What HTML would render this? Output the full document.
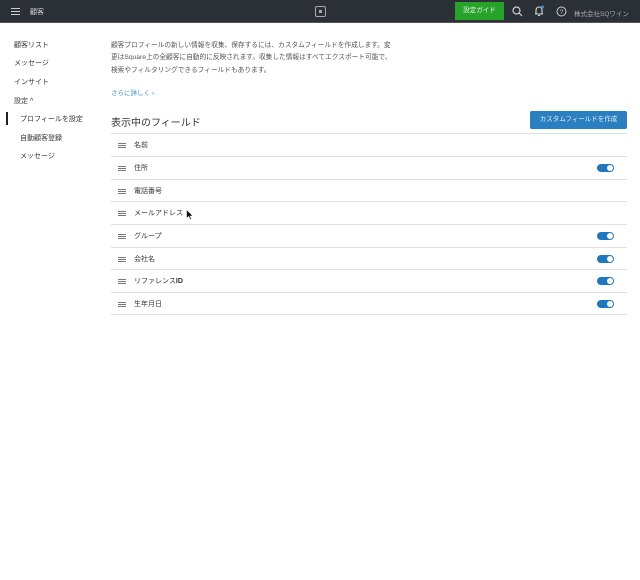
<!DOCTYPE html>
<html><head><meta charset="utf-8"><style>
*{margin:0;padding:0;box-sizing:border-box}
body{width:640px;height:580px;background:#fff;font-family:"Liberation Sans","Noto Sans CJK JP",sans-serif;color:#333;position:relative;overflow:hidden}
.hdr{position:absolute;left:0;top:0;width:640px;height:23px;background:#2b2f36;border-bottom:1px solid #555}
.a{position:absolute;white-space:nowrap}
.nav{font-size:7px;color:#333}
.row{position:absolute;left:111px;width:516px;height:23px;border-top:1px solid #e0e0e0}
.row .h{position:absolute;left:7px;top:9px;width:8px;height:5px;border-top:1px solid #777;border-bottom:1px solid #777}
.row .h:after{content:"";position:absolute;left:0;top:1px;width:8px;border-top:1px solid #777}
.row .t{position:absolute;left:23px;top:6px;font-size:7px;color:#333}
.tg{position:absolute;left:486px;top:7px;width:17px;height:8px;border-radius:4px;background:#1f78bd}
.tg:after{content:"";position:absolute;right:1px;top:1px;width:6px;height:6px;border-radius:3px;background:#fff}
</style></head><body>
<div class="hdr">
 <div class="a" style="left:11px;top:8px;width:9px;height:7px;border-top:1px solid #ccc;border-bottom:1px solid #ccc"></div>
 <div class="a" style="left:11px;top:11px;width:9px;border-top:1px solid #ccc"></div>
 <div class="a" style="left:30px;top:7px;font-size:7px;color:#ddd">顧客</div>
 <div class="a" style="left:315px;top:6px;width:11px;height:11px;border:1.5px solid #aaa;border-radius:2px"></div>
 <div class="a" style="left:319px;top:10px;width:3px;height:3px;background:#aaa"></div>
 <div class="a" style="left:455px;top:2px;width:49px;height:18px;background:#27a32a;color:#eee;font-size:6.5px;text-align:center;line-height:18px">設定ガイド</div>
 <svg class="a" style="left:512px;top:6px" width="11" height="11" viewBox="0 0 11 11"><circle cx="4.5" cy="4.5" r="3.5" fill="none" stroke="#ccc" stroke-width="1.2"/><path d="M7 7l3 3" stroke="#ccc" stroke-width="1.2"/></svg>
 <svg class="a" style="left:533px;top:5px" width="12" height="12" viewBox="0 0 12 12"><path d="M2 9h8M3 9V5a3 3 0 016 0v4M5 10.5h2" fill="none" stroke="#ddd" stroke-width="1.1"/><circle cx="9.5" cy="2" r="1.6" fill="#2a8fd8"/></svg>
 <svg class="a" style="left:556px;top:6px" width="11" height="11" viewBox="0 0 11 11"><circle cx="5.5" cy="5.5" r="4.5" fill="none" stroke="#ccc"/><text x="5.5" y="8" font-size="6.5" fill="#ccc" text-anchor="middle" font-family="Liberation Sans">?</text></svg>
 <div class="a" style="left:574px;top:8px;font-size:6.5px;color:#aaa">株式会社SQワイン</div>
</div>
<div class="a nav" style="left:14px;top:40px">顧客リスト</div>
<div class="a nav" style="left:14px;top:58px">メッセージ</div>
<div class="a nav" style="left:14px;top:77px">インサイト</div>
<div class="a nav" style="left:14px;top:96px">設定 ^</div>
<div class="a" style="left:6px;top:112px;width:2px;height:13px;background:#222"></div>
<div class="a nav" style="left:20px;top:114px">プロフィールを設定</div>
<div class="a nav" style="left:20px;top:133px">自動顧客登録</div>
<div class="a nav" style="left:20px;top:151px">メッセージ</div>
<div class="a" style="left:111px;top:40px;font-size:6.7px;line-height:12.3px;color:#555;white-space:normal;width:284px">顧客プロフィールの新しい情報を収集、保存するには、カスタムフィールドを作成します。変更はSquare上の全顧客に自動的に反映されます。収集した情報はすべてエクスポート可能で、検索やフィルタリングできるフィールドもあります。</div>
<div class="a" style="left:111px;top:87px;font-size:6.5px;color:#3a8fc8">さらに詳しく ›</div>
<div class="a" style="left:111px;top:114px;font-size:10px;color:#333">表示中のフィールド</div>
<div class="a" style="left:530px;top:111px;width:97px;height:18px;background:#2a7fc0;border-radius:2px;color:#e8f0f8;font-size:6.5px;text-align:center;line-height:18px">カスタムフィールドを作成</div>
<div class="row" style="top:133px"><div class="h"></div><div class="t">名前</div></div>
<div class="row" style="top:156px"><div class="h"></div><div class="t">住所</div><div class="tg"></div></div>
<div class="row" style="top:179px"><div class="h"></div><div class="t">電話番号</div></div>
<div class="row" style="top:201px"><div class="h"></div><div class="t">メールアドレス</div></div>
<div class="row" style="top:224px"><div class="h"></div><div class="t">グループ</div><div class="tg"></div></div>
<div class="row" style="top:247px"><div class="h"></div><div class="t">会社名</div><div class="tg"></div></div>
<div class="row" style="top:269px"><div class="h"></div><div class="t">リファレンス<b>ID</b></div><div class="tg"></div></div>
<div class="row" style="top:292px;border-bottom:1px solid #e0e0e0"><div class="h"></div><div class="t">生年月日</div><div class="tg"></div></div>
<svg class="a" style="left:186px;top:209px" width="8" height="11" viewBox="0 0 8 11"><path d="M0.5 0.5v9l2.2-2 1.6 3.2 1.3-.6-1.5-3.1h3z" fill="#111" stroke="#fff" stroke-width=".6"/></svg>
</body></html>
